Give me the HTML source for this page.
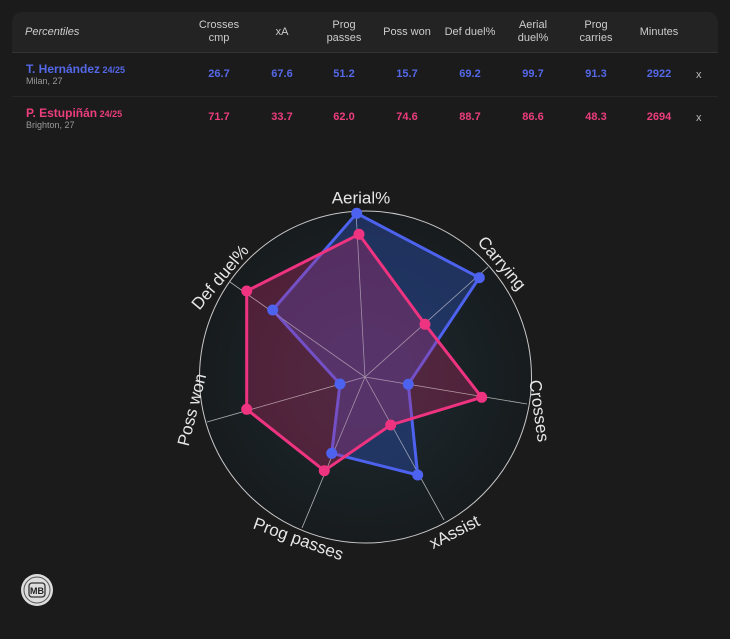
<!DOCTYPE html>
<html><head><meta charset="utf-8"><style>
body{margin:0;width:730px;height:639px;background:#1b1b1b;font-family:"Liberation Sans",sans-serif;overflow:hidden;position:relative}
.hdr{position:absolute;left:12px;top:12px;width:706px;height:40px;background:#232323;border-radius:10px 10px 0 0;border-bottom:1px solid #333}
.c{position:absolute;text-align:center;width:70px;font-size:11px;color:#ccc;line-height:13px}
.row{position:absolute;left:12px;width:706px;height:43px;border-bottom:1px solid #262626}
.v{position:absolute;text-align:center;width:70px;font-size:11px;font-weight:bold}
.b{color:#5468e8}.p{color:#ec3d7c}
.nm{position:absolute;left:14px;font-size:12px;font-weight:bold}
.sub{position:absolute;left:14px;font-size:9px;color:#999}
.x{position:absolute;left:684px;font-size:11px;color:#bbb}
</style></head><body>
<div class="hdr">
<div style="position:absolute;left:13px;top:14px;font-size:11px;font-style:italic;color:#ccc">Percentiles</div>
<div class="c" style="left:172px;top:7px">Crosses<br>cmp</div>
<div class="c" style="left:235px;top:14px">xA</div>
<div class="c" style="left:297px;top:7px">Prog<br>passes</div>
<div class="c" style="left:360px;top:14px">Poss won</div>
<div class="c" style="left:423px;top:14px">Def duel%</div>
<div class="c" style="left:486px;top:7px">Aerial<br>duel%</div>
<div class="c" style="left:549px;top:7px">Prog<br>carries</div>
<div class="c" style="left:612px;top:14px">Minutes</div>
</div>
<div class="row" style="top:53px">
<div class="nm b" style="top:9px">T. Hernández<span style="font-size:9px"> 24/25</span></div>
<div class="sub" style="top:23px">Milan, 27</div>
<div class="v b" style="left:172px;top:15px">26.7</div><div class="v b" style="left:235px;top:15px">67.6</div><div class="v b" style="left:297px;top:15px">51.2</div><div class="v b" style="left:360px;top:15px">15.7</div><div class="v b" style="left:423px;top:15px">69.2</div><div class="v b" style="left:486px;top:15px">99.7</div><div class="v b" style="left:549px;top:15px">91.3</div><div class="v b" style="left:612px;top:15px">2922</div><div class="x" style="top:16px">x</div>
</div>
<div class="row" style="top:96px;border:none">
<div class="nm p" style="top:10px">P. Estupiñán<span style="font-size:9px"> 24/25</span></div>
<div class="sub" style="top:24px">Brighton, 27</div>
<div class="v p" style="left:172px;top:15px">71.7</div><div class="v p" style="left:235px;top:15px">33.7</div><div class="v p" style="left:297px;top:15px">62.0</div><div class="v p" style="left:360px;top:15px">74.6</div><div class="v p" style="left:423px;top:15px">88.7</div><div class="v p" style="left:486px;top:15px">86.6</div><div class="v p" style="left:549px;top:15px">48.3</div><div class="v p" style="left:612px;top:15px">2694</div><div class="x" style="top:16px">x</div>
</div>
<svg width="730" height="639" style="position:absolute;left:0;top:0">
<defs><radialGradient id="g"><stop offset="0" stop-color="#1d2c33"/><stop offset="1" stop-color="#171b1d"/></radialGradient></defs>
<circle cx="365.5" cy="377" r="166" fill="url(#g)" stroke="#c8c8c8" stroke-width="1"/>
<g stroke="#aaa" stroke-width="0.8">
<line x1="365" y1="377" x2="356" y2="211"/><line x1="365" y1="377" x2="488" y2="267"/><line x1="365" y1="377" x2="527" y2="404"/><line x1="365" y1="377" x2="444" y2="520"/><line x1="365" y1="377" x2="302" y2="528"/><line x1="365" y1="377" x2="207" y2="422"/><line x1="365" y1="377" x2="230" y2="282"/>
</g>
<polygon points="356.7,213.3 479.3,277.7 408.3,384.3 417.7,475 331.7,453.3 340,384 272.7,310" fill="rgba(50,90,220,0.33)" stroke="#4d62ee" stroke-width="3" stroke-linejoin="round"/>
<polygon points="359,234.3 425,324.3 481.7,397.3 390.7,425 324.3,470.7 246.7,409.3 246.7,291" fill="rgba(210,40,110,0.3)" stroke="#ee3380" stroke-width="3" stroke-linejoin="round"/>
<g stroke="#aaa" stroke-width="0.6" opacity="0.6">
<line x1="365" y1="377" x2="356" y2="211"/><line x1="365" y1="377" x2="488" y2="267"/><line x1="365" y1="377" x2="527" y2="404"/><line x1="365" y1="377" x2="444" y2="520"/><line x1="365" y1="377" x2="302" y2="528"/><line x1="365" y1="377" x2="207" y2="422"/><line x1="365" y1="377" x2="230" y2="282"/>
</g>
<g fill="#4d62ee"><circle cx="356.7" cy="213.3" r="5.5"/><circle cx="479.3" cy="277.7" r="5.5"/><circle cx="408.3" cy="384.3" r="5.5"/><circle cx="417.7" cy="475" r="5.5"/><circle cx="331.7" cy="453.3" r="5.5"/><circle cx="340" cy="384" r="5.5"/><circle cx="272.7" cy="310" r="5.5"/></g>
<g fill="#ee3380"><circle cx="359" cy="234.3" r="5.5"/><circle cx="425" cy="324.3" r="5.5"/><circle cx="481.7" cy="397.3" r="5.5"/><circle cx="390.7" cy="425" r="5.5"/><circle cx="324.3" cy="470.7" r="5.5"/><circle cx="246.7" cy="409.3" r="5.5"/><circle cx="246.7" cy="291" r="5.5"/></g>
<g fill="#e6e6e6" font-family="Liberation Sans,sans-serif" font-size="17" text-anchor="middle" dominant-baseline="middle">
<text x="361" y="199">Aerial%</text>
<text transform="translate(501,264) rotate(50)">Carrying</text>
<text transform="translate(538,411) rotate(82)">Crosses</text>
<text transform="translate(455,533) rotate(-27)">xAssist</text>
<text transform="translate(298,540) rotate(20)">Prog passes</text>
<text transform="translate(193,410) rotate(-76)">Poss won</text>
<text transform="translate(221,278) rotate(-50)">Def duel%</text>
</g>
<circle cx="37" cy="590" r="16" fill="#ddd"/><circle cx="37" cy="590" r="13" fill="none" stroke="#555" stroke-width="1"/>
<rect x="29" y="583" width="16" height="14" rx="3" fill="#ddd" stroke="#333" stroke-width="1.3"/>
<text x="37" y="594" font-size="9" font-weight="bold" text-anchor="middle" fill="#222" font-family="Liberation Sans,sans-serif">MB</text>
</svg>
</body></html>
